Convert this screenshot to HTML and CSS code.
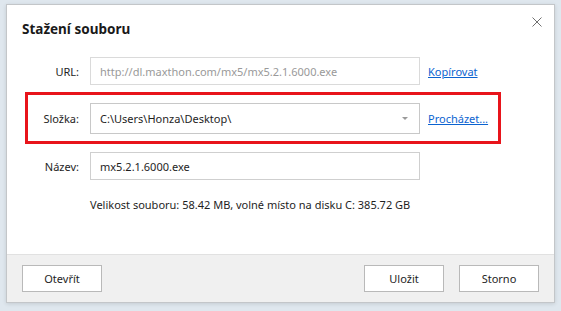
FILE: index.html
```html
<!DOCTYPE html>
<html lang="cs">
<head>
  <meta charset="UTF-8">
  <title>Stažení souboru</title>
  <link rel="stylesheet" href="styles.css">
</head>
<body>
  <!-- Download dialog -->
  <div class="dialog">
    <div class="dialog-header">
      <div class="dialog-title">Stažení souboru</div>
      <div class="close-btn">
        <svg width="10" height="10" viewBox="0 0 10 10">
          <path d="M0.5 0.5 L9.5 9.5 M9.5 0.5 L0.5 9.5" stroke="#707070" stroke-width="1" fill="none"/>
        </svg>
      </div>
    </div>

    <div class="dialog-body">
      <div class="form-row row-url">
        <label class="field-label">URL:</label>
        <div class="field-input muted">http://dl.maxthon.com/mx5/mx5.2.1.6000.exe</div>
        <a class="field-link" href="#">Kopírovat</a>
      </div>

      <div class="form-row row-folder highlight">
        <label class="field-label">Složka:</label>
        <div class="field-input select">
          <span>C:\Users\Honza\Desktop\</span>
          <span class="select-arrow"></span>
        </div>
        <a class="field-link" href="#">Procházet...</a>
      </div>

      <div class="form-row row-name">
        <label class="field-label">Název:</label>
        <div class="field-input">mx5.2.1.6000.exe</div>
      </div>

      <div class="file-info">Velikost souboru: 58.42 MB, volné místo na disku C: 385.72 GB</div>
    </div>

    <div class="dialog-footer">
      <button class="btn">Otevřít</button>
      <div class="footer-right">
        <button class="btn">Uložit</button>
        <button class="btn">Storno</button>
      </div>
    </div>
  </div>
</body>
</html>
```

FILE: styles.css
```css
html, body {
  margin: 0;
  padding: 0;
  width: 100%;
  height: 100%;
}

body {
  background: #dfe7ee;
  font-family: "Noto Sans", "Open Sans", Arial, sans-serif;
  font-size: 11px;
  color: #1e1e1e;
  padding: 4px 6px;
  box-sizing: border-box;
}

/* Dialog frame */
.dialog {
  width: 549px;
  height: 299px;
  box-sizing: border-box;
  background: #fff;
  border: 1px solid #c3c6c9;
  box-shadow: 0 1px 4px rgba(0, 0, 0, 0.12);
  display: flex;
  flex-direction: column;
}

.dialog-header {
  display: flex;
  justify-content: space-between;
  align-items: flex-start;
  padding: 0 12px 0 15px;
  height: 49px;
}

.dialog-title {
  font-size: 13.5px;
  font-weight: bold;
  color: #1a1a1a;
  margin-top: 15px;
}

.close-btn {
  margin-top: 12px;
  width: 10px;
  height: 10px;
  line-height: 0;
}

/* Form */
.dialog-body {
  flex: 1;
  padding: 0 0 0 18px;
}

.form-row {
  display: flex;
  align-items: center;
  width: 476px;
  box-sizing: border-box;
  border: 3px solid transparent;
}

.row-url {
  margin-top: 0;
}

.row-folder {
  margin-top: 4px;
  padding: 8px 0 7px;
}

.row-name {
  margin-top: 5px;
}

.highlight {
  border-color: #e8141b;
}

.field-label {
  width: 51px;
  text-align: right;
  margin-right: 11px;
  color: #1e1e1e;
}

.field-input {
  width: 330px;
  height: 28px;
  box-sizing: border-box;
  border: 1px solid #cfcfcf;
  padding: 0 9px;
  display: flex;
  align-items: center;
  white-space: nowrap;
}

.field-input.muted {
  color: #999;
  border-color: #dadada;
}

.field-input.select {
  height: 31px;
  justify-content: space-between;
  border-color: #c8c8c8;
}

.select-arrow {
  width: 0;
  height: 0;
  border-left: 3px solid transparent;
  border-right: 3px solid transparent;
  border-top: 3px solid #9a9a9a;
  margin-right: 2px;
}

.field-link {
  margin-left: 8px;
  color: #0b63d0;
  text-decoration: underline;
}

.file-info {
  margin-top: 14px;
  padding-left: 65px;
}

/* Footer */
.dialog-footer {
  background: #f0f0f0;
  border-top: 1px solid #e1e1e1;
  padding: 10px 15px;
  display: flex;
  justify-content: space-between;
}

.footer-right {
  display: flex;
  gap: 15px;
}

.btn {
  width: 80px;
  height: 27px;
  background: #fff;
  border: 1px solid #b9b9b9;
  font-family: inherit;
  font-size: 11px;
  font-weight: normal;
  color: #1e1e1e;
  padding: 0;
  margin: 0;
}
```
